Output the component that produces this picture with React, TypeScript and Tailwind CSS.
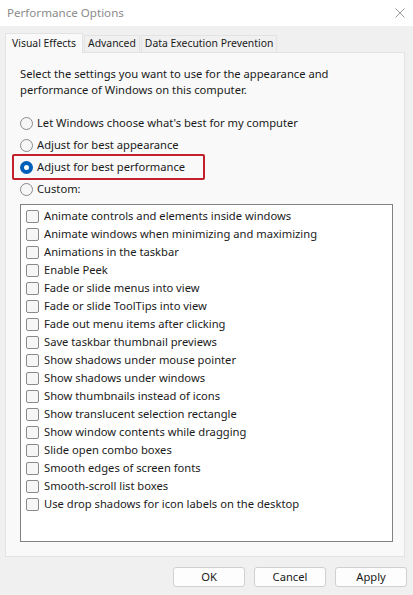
import React from "react";

const items = [
  "Animate controls and elements inside windows",
  "Animate windows when minimizing and maximizing",
  "Animations in the taskbar",
  "Enable Peek",
  "Fade or slide menus into view",
  "Fade or slide ToolTips into view",
  "Fade out menu items after clicking",
  "Save taskbar thumbnail previews",
  "Show shadows under mouse pointer",
  "Show shadows under windows",
  "Show thumbnails instead of icons",
  "Show translucent selection rectangle",
  "Show window contents while dragging",
  "Slide open combo boxes",
  "Smooth edges of screen fonts",
  "Smooth-scroll list boxes",
  "Use drop shadows for icon labels on the desktop",
];

function Radio({ checked, label }: { checked?: boolean; label: string }) {
  return (
    <div className="flex items-center h-[22px]">
      {checked ? (
        <span className="w-[13px] h-[13px] rounded-full bg-[#005fb8] flex items-center justify-center shrink-0">
          <span className="w-[5px] h-[5px] rounded-full bg-white" />
        </span>
      ) : (
        <span className="w-[13px] h-[13px] rounded-full border border-[#8a8a8a] bg-[#f6f6f6] shrink-0" />
      )}
      <span className="ml-[4px] whitespace-nowrap">{label}</span>
    </div>
  );
}

export default function App() {
  return (
    <div
      className="w-[413px] h-[595px] bg-[#f0f0f0] text-[11.2px] text-[#1a1a1a] flex flex-col overflow-hidden"
      style={{ fontFamily: '"Noto Sans", "Open Sans", sans-serif' }}
    >
      <div className="h-[26px] bg-white flex items-center justify-between pl-[7px] pr-[6px] shrink-0">
        <span className="text-[#8c8c8c] text-[11.6px]">Performance Options</span>
        <svg width="10" height="10" viewBox="0 0 10 10" className="mr-[2px]">
          <path d="M0.5 0.5 L9.5 9.5 M9.5 0.5 L0.5 9.5" stroke="#9a9a9a" strokeWidth="1" />
        </svg>
      </div>
      <div className="flex items-end pl-[5px] pt-[7px] h-[26px] shrink-0 text-[10.4px]">
        <div className="h-[20px] px-[6px] bg-[#f9f9f9] border border-b-0 border-[#e3e3e3] flex items-center relative top-[1px] z-10 whitespace-nowrap">
          Visual Effects
        </div>
        <div className="h-[17px] px-[3px] ml-[1px] bg-[#f0f0f0] border border-b-0 border-[#e3e3e3] flex items-center whitespace-nowrap">
          Advanced
        </div>
        <div className="h-[17px] px-[3px] ml-[1px] bg-[#f0f0f0] border border-b-0 border-[#e3e3e3] flex items-center whitespace-nowrap">
          Data Execution Prevention
        </div>
      </div>
      <div className="ml-[5px] mr-[8px] h-[505px] bg-[#f9f9f9] border border-[#e3e3e3] pl-[14px] pr-[11px] pt-[13px] shrink-0">
        <p className="leading-[16px]">
          Select the settings you want to use for the appearance and
          <br />
          performance of Windows on this computer.
        </p>
        <div className="mt-[14px]">
          <Radio label="Let Windows choose what's best for my computer" />
          <Radio label="Adjust for best appearance" />
          <div className="ml-[-8px] w-[193px] h-[26px] border-2 border-[#c0212b] rounded-[2px] pl-[6px] flex items-center my-[-2px]">
            <Radio checked label="Adjust for best performance" />
          </div>
          <Radio label="Custom:" />
        </div>
        <div className="mt-[4px] h-[338px] bg-white border border-[#828282] pt-[2px] pl-[5px]">
          {items.map((t) => (
            <div key={t} className="flex items-center h-[18px]">
              <span className="w-[13px] h-[13px] rounded-[2px] border border-[#8a8a8a] bg-[#f6f6f6] shrink-0" />
              <span className="ml-[5px] whitespace-nowrap">{t}</span>
            </div>
          ))}
        </div>
      </div>
      <div className="flex justify-end gap-[9px] pr-[6px] mt-[10px]">
        {["OK", "Cancel", "Apply"].map((b) => (
          <div
            key={b}
            className="w-[72px] h-[20px] bg-[#fdfdfd] border border-[#d0d0d0] rounded-[3px] flex items-center justify-center"
          >
            {b}
          </div>
        ))}
      </div>
    </div>
  );
}
